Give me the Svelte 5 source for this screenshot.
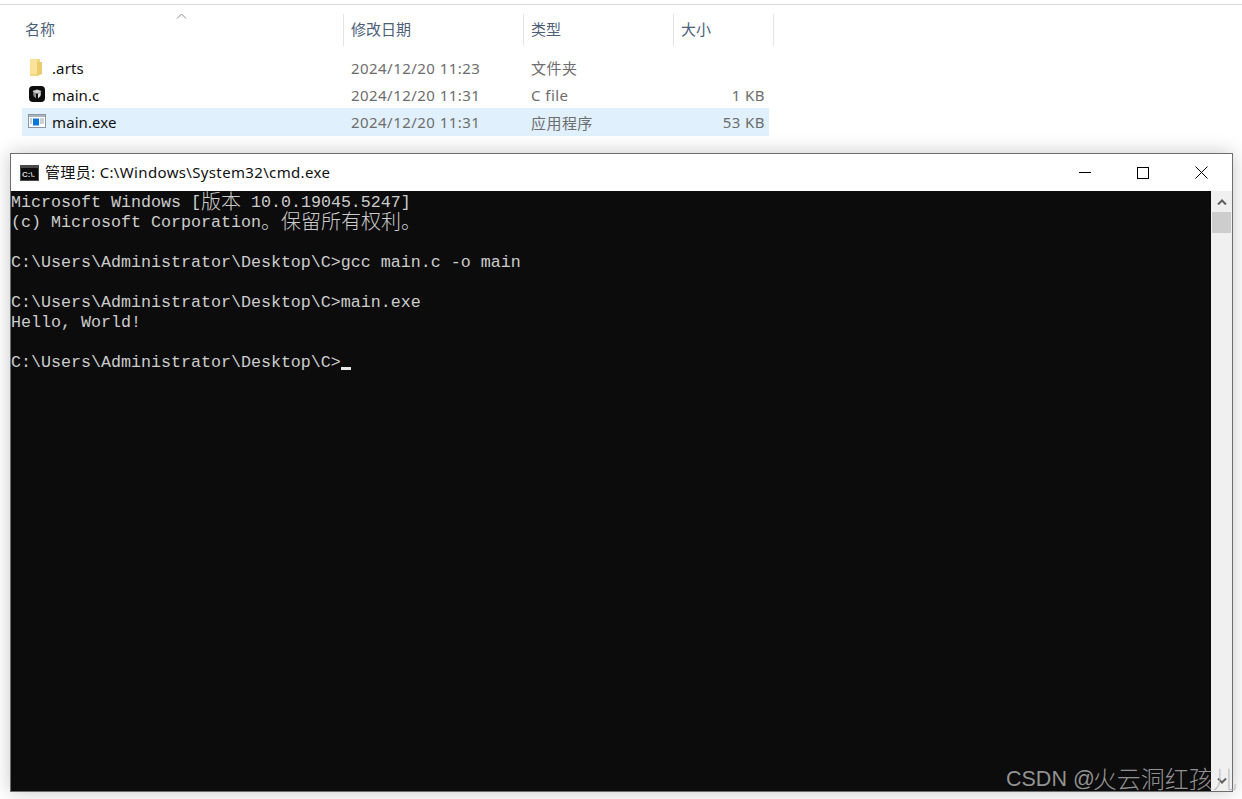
<script>
	const columns = [
		{ label: '名称' },
		{ label: '修改日期' },
		{ label: '类型' },
		{ label: '大小' }
	]

	const files = [
		{ name: '.arts', icon: 'folder', date: '2024/12/20 11:23', type: '文件夹', size: '' },
		{ name: 'main.c', icon: 'source', date: '2024/12/20 11:31', type: 'C file', size: '1 KB' },
		{ name: 'main.exe', icon: 'exe', date: '2024/12/20 11:31', type: '应用程序', size: '53 KB', selected: true }
	]
</script>

<main>
	<section class="explorer">
		<div class="head">
			{#each columns as col}
				<div class="col">{col.label}</div>
			{/each}
			<svg class="sort" width="11" height="6" viewBox="0 0 11 6"><path d="M1 5.500 5.500 1 10 5.500" fill="none" stroke="#8a8a8a" /></svg>
		</div>
		<div class="rows">
			{#each files as file}
				<div class="row" class:selected={file.selected}>
					<div class="name">
						{#if file.icon === 'folder'}
							<svg width="18" height="18" viewBox="0 0 18 18">
								<path d="M2 0h10v15l-3 2H2z" fill="#f5d77f" />
								<path d="M9 3h5v12l-5 2z" fill="#eccb6c" />
								<path d="M2 0h7v15H3l-1 1z" fill="#fae29b" />
							</svg>
						{:else if file.icon === 'source'}
							<svg width="18" height="18" viewBox="0 0 18 18">
								<rect x="1" y="0" width="16" height="16" rx="4" fill="#0d0d0d" />
								<path d="M4.500 5 9 3.500 13.500 5 11 7.500H7z" fill="#cfcfcf" />
								<path d="M5 6l3 2v4.500L5.500 10z" fill="#8d8d8d" />
								<path d="M13 6l-3 2v4.500L12.500 10z" fill="#e2e2e2" />
							</svg>
						{:else}
							<svg width="18" height="18" viewBox="0 0 18 18">
								<rect x="0.500" y="1.500" width="17" height="13" fill="#fff" stroke="#8b97a5" />
								<rect x="1" y="2" width="16" height="2" fill="#aab4bf" />
								<rect x="5" y="5.500" width="6" height="7" fill="#0a78dc" />
								<path d="M2 6h2M2 8h2M2 10h2M12 6h4M12 8h4M12 10h4" stroke="#9aa3ad" />
							</svg>
						{/if}
						<span>{file.name}</span>
					</div>
					<div class="cell">{file.date}</div>
					<div class="cell">{file.type}</div>
					<div class="cell size">{file.size}</div>
				</div>
			{/each}
		</div>
	</section>

	<section class="window">
		<header class="titlebar">
			<svg class="appicon" width="19" height="16" viewBox="0 0 19 16">
				<rect width="19" height="16" fill="#4a4a4a" />
				<rect x="1" y="3" width="17" height="12" fill="#0c0c0c" />
				<text x="2" y="12" font-size="8" font-weight="700" fill="#d8d8d8" font-family="Liberation Sans, sans-serif">C:\.</text>
			</svg>
			<div class="title">管理员: C:\Windows\System32\cmd.exe</div>
			<div class="controls">
				<div class="btn"><svg width="12" height="12" viewBox="0 0 12 12"><path d="M0 5.500h12" stroke="#000" /></svg></div>
				<div class="btn"><svg width="12" height="12" viewBox="0 0 12 12"><rect x="0.500" y="0.500" width="11" height="11" fill="none" stroke="#000" /></svg></div>
				<div class="btn"><svg width="13" height="13" viewBox="0 0 13 13"><path d="M0.500 0.500l12 12M12.500 0.500l-12 12" stroke="#000" /></svg></div>
			</div>
		</header>
		<div class="body">
			<div class="console">
				<div class="line">Microsoft Windows [<span class="cjk">版本</span> 10.0.19045.5247]</div>
				<div class="line">(c) Microsoft Corporation<span class="cjk">。保留所有权利。</span></div>
				<div class="line"></div>
				<div class="line">C:\Users\Administrator\Desktop\C&gt;gcc main.c -o main</div>
				<div class="line"></div>
				<div class="line">C:\Users\Administrator\Desktop\C&gt;main.exe</div>
				<div class="line">Hello, World!</div>
				<div class="line"></div>
				<div class="line">C:\Users\Administrator\Desktop\C&gt;<span class="cursor"></span></div>
			</div>
			<div class="scrollbar">
				<div class="arrow">
					<svg width="10" height="6" viewBox="0 0 10 6"><path d="M1 5.500 5 1.500 9 5.500" fill="none" stroke="#606060" stroke-width="2" /></svg>
				</div>
				<div class="thumb"></div>
				<div class="arrow end">
					<svg width="10" height="6" viewBox="0 0 10 6"><path d="M1 0.500 5 4.500 9 0.500" fill="none" stroke="#606060" stroke-width="2" /></svg>
				</div>
			</div>
		</div>
	</section>

	<div class="watermark">CSDN @<span>火云洞红孩儿</span></div>
</main>

<style>
	:global(body) {
		margin: 0;
		background: #fff;
		overflow: hidden;
	}

	main {
		position: relative;
		width: 1242px;
		height: 799px;
		overflow: hidden;
		font-family: "Noto Sans", "Noto Sans CJK SC", sans-serif;
		box-sizing: border-box;
		padding-top: 4px;
	}

	.explorer {
		border-top: 1px solid #dcdcdc;
		padding-top: 9px;
		padding-left: 22px;
	}

	.head {
		position: relative;
		display: grid;
		grid-template-columns: 322px 180px 150px 100px;
		width: 752px;
		height: 32px;
	}

	.col {
		border-right: 1px solid #e5e5e5;
		padding-left: 7px;
		font-size: 15px;
		line-height: 30px;
		color: #4c607a;
	}

	.col:first-child {
		padding-left: 3px;
	}

	.sort {
		position: absolute;
		left: 154px;
		top: -1px;
	}

	.rows {
		margin-top: 8px;
	}

	.row {
		display: grid;
		grid-template-columns: 322px 180px 150px 95px;
		width: 747px;
		height: 27px;
		align-items: center;
		font-size: 15px;
	}

	.row.selected {
		background: #e1f0fd;
		height: 28px;
	}

	.name {
		display: flex;
		align-items: center;
		gap: 6px;
		padding-left: 6px;
		color: #111;
		letter-spacing: 0.1px;
	}

	.cell {
		padding-left: 7px;
		color: #6d6d6d;
		letter-spacing: 0.45px;
	}

	.size {
		padding: 0 4px 0 0;
		text-align: right;
	}

	.window {
		box-sizing: border-box;
		width: 1223px;
		height: 639px;
		margin: 17px 0 0 10px;
		display: flex;
		flex-direction: column;
		background: #fff;
		border: 1px solid #6e6e6e;
		box-shadow: 0 0 18px rgba(0, 0, 0, 0.22);
	}

	.titlebar {
		display: flex;
		align-items: center;
		height: 37px;
		flex: none;
		padding-left: 9px;
	}

	.title {
		flex: 1;
		margin: 0 0 2px 6px;
		font-size: 15px;
		letter-spacing: 0.35px;
		color: #111;
	}

	.controls {
		display: flex;
		margin-right: 2px;
	}

	.btn {
		display: flex;
		align-items: center;
		justify-content: center;
		width: 58px;
		height: 37px;
	}

	.body {
		flex: 1;
		display: flex;
		min-height: 0;
	}

	.console {
		flex: 1;
		background: #0c0c0c;
		color: #cccccc;
		padding-top: 1px;
		font-family: "Liberation Mono", "Noto Sans CJK SC", monospace;
		font-size: 16.67px;
		line-height: 20px;
	}

	.line {
		height: 20px;
		white-space: pre;
		position: relative;
		top: 1px;
	}

	.cjk {
		position: relative;
		top: 2px;
		font-family: "Noto Sans CJK SC", sans-serif;
		font-size: 20px;
		line-height: 0;
		font-weight: 300;
	}

	.cursor {
		display: inline-block;
		width: 10px;
		height: 3px;
		background: #e8e8e8;
		vertical-align: -3px;
	}

	.scrollbar {
		width: 21px;
		background: #f0f0f0;
		display: flex;
		flex-direction: column;
	}

	.arrow {
		height: 21px;
		display: flex;
		align-items: center;
		justify-content: center;
		flex: none;
	}

	.arrow.end {
		margin-top: auto;
	}

	.thumb {
		height: 21px;
		margin: 0 1px;
		background: #cdcdcd;
	}

	.watermark {
		position: absolute;
		left: 1006px;
		top: 765px;
		font-family: "Liberation Sans", "Noto Sans CJK SC", sans-serif;
		font-size: 21.500px;
		line-height: 28px;
		white-space: nowrap;
		color: rgba(178, 178, 178, 0.82);
	}

	.watermark span {
		position: relative;
		top: 2px;
		font-size: 24px;
		line-height: 0;
		margin-left: -2px;
		font-family: "Noto Sans CJK SC", sans-serif;
		font-weight: 300;
	}
</style>
